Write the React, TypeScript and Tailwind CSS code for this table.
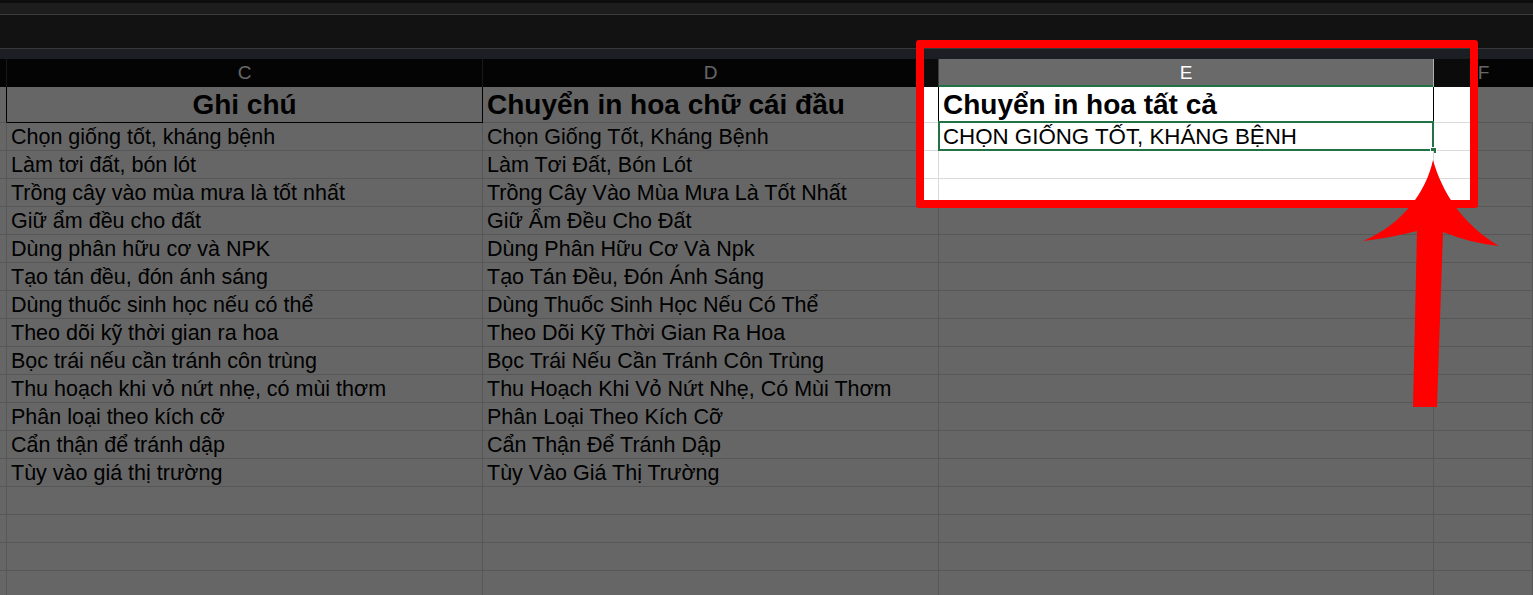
import React from "react";

const notes = [
  "Chọn giống tốt, kháng bệnh",
  "Làm tơi đất, bón lót",
  "Trồng cây vào mùa mưa là tốt nhất",
  "Giữ ẩm đều cho đất",
  "Dùng phân hữu cơ và NPK",
  "Tạo tán đều, đón ánh sáng",
  "Dùng thuốc sinh học nếu có thể",
  "Theo dõi kỹ thời gian ra hoa",
  "Bọc trái nếu cần tránh côn trùng",
  "Thu hoạch khi vỏ nứt nhẹ, có mùi thơm",
  "Phân loại theo kích cỡ",
  "Cẩn thận để tránh dập",
  "Tùy vào giá thị trường",
];

const titled = [
  "Chọn Giống Tốt, Kháng Bệnh",
  "Làm Tơi Đất, Bón Lót",
  "Trồng Cây Vào Mùa Mưa Là Tốt Nhất",
  "Giữ Ẩm Đều Cho Đất",
  "Dùng Phân Hữu Cơ Và Npk",
  "Tạo Tán Đều, Đón Ánh Sáng",
  "Dùng Thuốc Sinh Học Nếu Có Thể",
  "Theo Dõi Kỹ Thời Gian Ra Hoa",
  "Bọc Trái Nếu Cần Tránh Côn Trùng",
  "Thu Hoạch Khi Vỏ Nứt Nhẹ, Có Mùi Thơm",
  "Phân Loại Theo Kích Cỡ",
  "Cẩn Thận Để Tránh Dập",
  "Tùy Vào Giá Thị Trường",
];

const cell = "h-full border-r border-b border-[#dadada] bg-white";
const txt = "text-[21.5px] text-black whitespace-nowrap";

function DataRow({ c, d, e, selected }: { c?: string; d?: string; e?: string; selected?: boolean }) {
  return (
    <div className="flex h-[28px] shrink-0">
      <div className={`${cell} w-[7px]`} />
      <div className={`${cell} w-[476px] flex items-center pl-1 pt-px ${txt}`}>{c}</div>
      <div className={`${cell} w-[456px] flex items-center pl-1 pt-px ${txt}`}>{d}</div>
      <div className={`${cell} w-[495px] relative flex items-center pl-1 pt-px text-[22.3px] text-black whitespace-nowrap`}>
        {e}
        {selected && (
          <>
            <div className="absolute -left-px -top-[2px] -right-px -bottom-px border-2 border-[#217346]" />
            <div className="absolute -right-[4px] -bottom-[4px] w-[7px] h-[7px] bg-[#217346] border border-white" />
          </>
        )}
      </div>
      <div className={`${cell} flex-1`} />
    </div>
  );
}

export default function App() {
  const empty = Array.from({ length: 5 });

  return (
    <div
      className="relative w-[1533px] h-[595px] overflow-hidden bg-black flex flex-col"
      style={{ fontFamily: '"Liberation Sans", Arial, sans-serif' }}
    >
      {/* window chrome */}
      <div className="h-[3px] shrink-0 bg-[#0d0d0d]" />
      <div className="h-[11px] shrink-0 bg-[#1d1d1d]" />
      <div className="h-px shrink-0 bg-[#3b3b3b]" />
      <div className="h-[33px] shrink-0 bg-[#121212]" />
      <div className="h-px shrink-0 bg-[#383838]" />
      <div className="h-[10px] shrink-0 bg-[#1b1f23]" />

      {/* sheet */}
      <div className="relative flex-1 overflow-hidden flex flex-col">
        {/* column headers */}
        <div className="flex h-[28px] shrink-0 bg-[#0b0b0b] text-[19px] text-white">
          <div className="w-[7px] border-r border-[#3c3c3c]" />
          <div className="w-[476px] border-r border-[#3c3c3c] flex items-center justify-center">C</div>
          <div className="w-[456px] border-r border-[#3c3c3c] flex items-center justify-center">D</div>
          <div className="w-[495px] border-r border-[#b0b0b0] bg-[#6a6a6a] shadow-[inset_0_-2px_0_#217346] flex items-center justify-center">
            E
          </div>
          <div className="flex-1 flex items-center justify-center">F</div>
        </div>

        {/* title row */}
        <div className="flex h-[36px] shrink-0 text-[28px] font-bold text-black whitespace-nowrap">
          <div className="w-[7px] bg-white border-r border-black border-b border-b-[#dadada]" />
          <div className="w-[476px] bg-white border-r border-b border-black flex items-center justify-center">
            Ghi chú
          </div>
          <div className="w-[456px] bg-white border-r border-black border-b border-b-[#dadada] flex items-center pl-1">
            Chuyển in hoa chữ cái đầu
          </div>
          <div className="w-[495px] bg-white border-r border-black flex items-center pl-1">
            Chuyển in hoa tất cả
          </div>
          <div className="flex-1 bg-white border-b border-[#dadada]" />
        </div>

        {notes.map((n, i) => (
          <DataRow
            key={n}
            c={n}
            d={titled[i]}
            e={i === 0 ? "CHỌN GIỐNG TỐT, KHÁNG BỆNH" : undefined}
            selected={i === 0}
          />
        ))}
        {empty.map((_, i) => (
          <DataRow key={`e${i}`} />
        ))}

        {/* dimming with a hole over the highlighted area */}
        <div className="pointer-events-none absolute left-[924px] -top-[11px] w-[546px] h-[152px] shadow-[0_0_0_3000px_rgba(0,0,0,0.6)]" />
      </div>

      {/* red highlight frame */}
      <div className="pointer-events-none absolute left-[916px] top-[40px] w-[562px] h-[168px] border-8 border-[#ff0000] rounded-[3px]" />

      {/* red arrow */}
      <svg className="pointer-events-none absolute left-0 top-0" width="1533" height="595" viewBox="0 0 1533 595">
        <path
          d="M1433 160 C1426 192 1403 224 1363 241 Q1390 238 1417 231 L1413 407 L1437 407 L1443 232 Q1470 243 1499 246 C1462 224 1442 192 1433 160 Z"
          fill="#ff0000"
        />
      </svg>
    </div>
  );
}
